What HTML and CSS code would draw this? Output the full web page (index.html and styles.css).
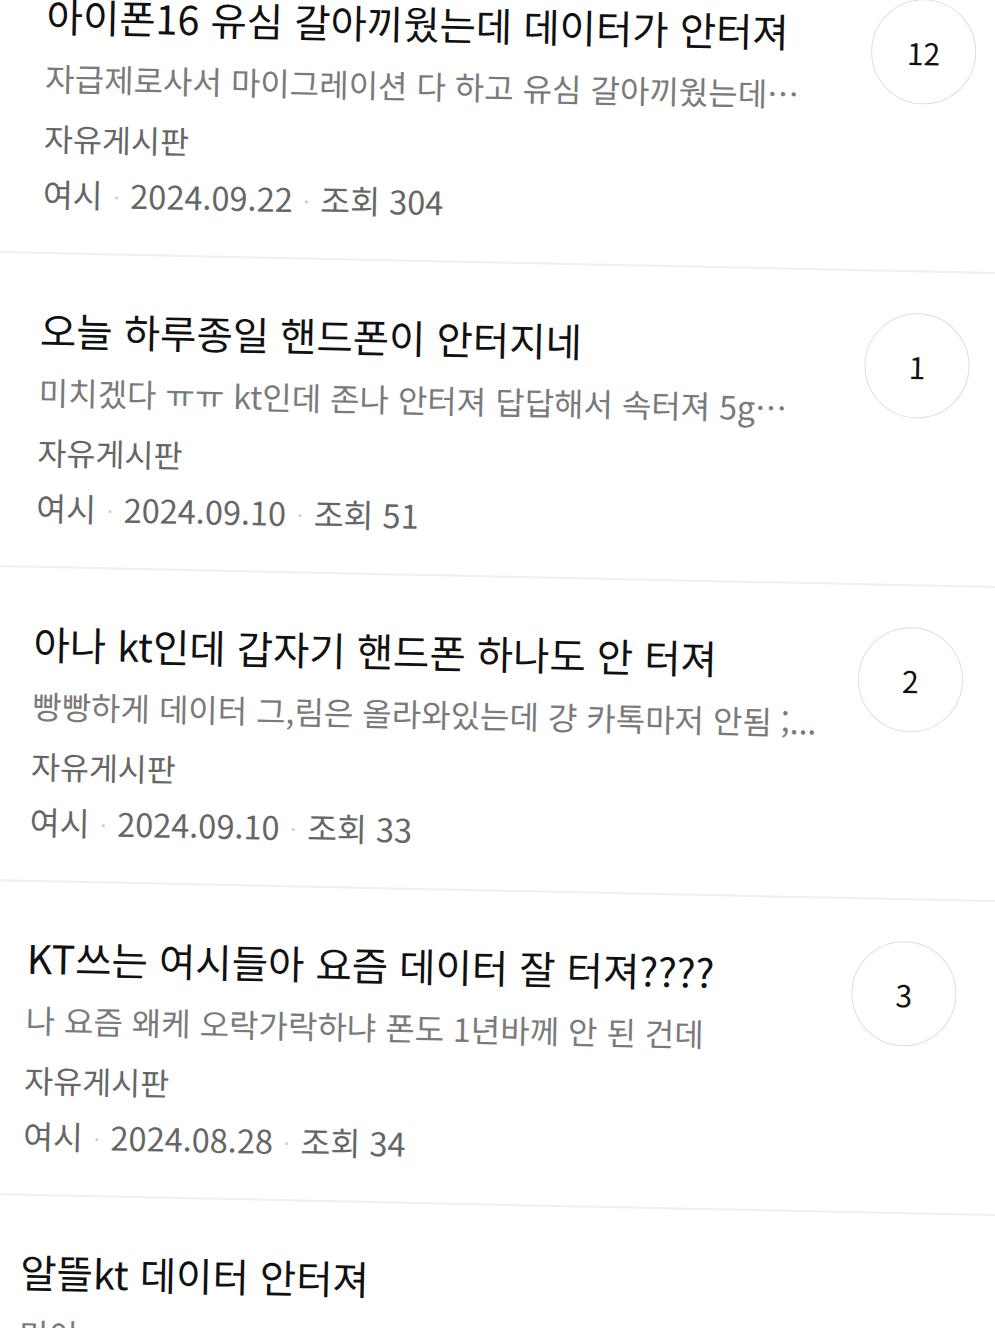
FILE: index.html
```html
<!DOCTYPE html>
<html lang="ko">
<head>
    <meta charset="UTF-8">
    <meta name="viewport" content="width=device-width, initial-scale=1.0">
    <title>검색 결과</title>
    <link rel="stylesheet" href="styles.css">
</head>
<body>
    <div class="list">
        <div class="item">
            <div class="text">
                <h3 class="title">아이폰16 유심 갈아끼웠는데 데이터가 안터져</h3>
                <p class="snippet">자급제로사서 마이그레이션 다 하고 유심 갈아끼웠는데…</p>
                <p class="board">자유게시판</p>
                <p class="meta">여시<span class="dot">·</span>2024.09.22<span class="dot">·</span>조회 304</p>
            </div>
            <div class="count">12</div>
        </div>
        <div class="item">
            <div class="text">
                <h3 class="title">오늘 하루종일 핸드폰이 안터지네</h3>
                <p class="snippet">미치겠다 ㅠㅠ kt인데 존나 안터져 답답해서 속터져 5g…</p>
                <p class="board">자유게시판</p>
                <p class="meta">여시<span class="dot">·</span>2024.09.10<span class="dot">·</span>조회 51</p>
            </div>
            <div class="count">1</div>
        </div>
        <div class="item">
            <div class="text">
                <h3 class="title">아나 kt인데 갑자기 핸드폰 하나도 안 터져</h3>
                <p class="snippet">빵빵하게 데이터 그,림은 올라와있는데 걍 카톡마저 안됨 ;...</p>
                <p class="board">자유게시판</p>
                <p class="meta">여시<span class="dot">·</span>2024.09.10<span class="dot">·</span>조회 33</p>
            </div>
            <div class="count">2</div>
        </div>
        <div class="item">
            <div class="text">
                <h3 class="title">KT쓰는 여시들아 요즘 데이터 잘 터져????</h3>
                <p class="snippet">나 요즘 왜케 오락가락하냐 폰도 1년바께 안 된 건데</p>
                <p class="board">자유게시판</p>
                <p class="meta">여시<span class="dot">·</span>2024.08.28<span class="dot">·</span>조회 34</p>
            </div>
            <div class="count">3</div>
        </div>
        <div class="item">
            <div class="text">
                <h3 class="title">알뜰kt 데이터 안터져</h3>
                <p class="snippet">미이</p>
            </div>
        </div>
    </div>
</body>
</html>
```

FILE: styles.css
```css
html, body {
    margin: 0;
    padding: 0;
    background: #ffffff;
    overflow: hidden;
    height: 1328px;
}
body {
    font-family: "Noto Sans CJK KR", "Noto Sans", sans-serif;
}
.list {
    width: 1060px;
    margin-top: -61px;
    transform: rotate(1.2deg);
    transform-origin: 0 61px;
}
.item {
    display: flex;
    align-items: flex-start;
    padding: 41px 83px 35px 47px;
    border-bottom: 2px solid #efefef;
    height: 236px;
}
.text {
    flex: 1;
    padding-top: 9px;
}
.title {
    margin: 0;
    font-size: 39.5px;
    font-weight: 400;
    line-height: 50px;
    color: #111111;
    white-space: nowrap;
}
.snippet {
    margin: 12px 0 0;
    font-size: 32px;
    line-height: 50px;
    color: #7a7a7a;
    white-space: nowrap;
}
.board {
    margin: 10px 0 0;
    font-size: 31.5px;
    line-height: 50px;
    color: #666666;
}
.meta {
    margin: 6px 0 0;
    font-size: 32.5px;
    line-height: 50px;
    color: #666666;
}
.dot {
    color: #c8c8c8;
    font-size: 20px;
    margin: 0 11px;
    vertical-align: 3px;
}
.count {
    width: 103px;
    height: 103px;
    border: 1px solid #dedede;
    border-radius: 50%;
    display: flex;
    align-items: center;
    justify-content: center;
    font-size: 30px;
    color: #111111;
    flex-shrink: 0;
}
```
